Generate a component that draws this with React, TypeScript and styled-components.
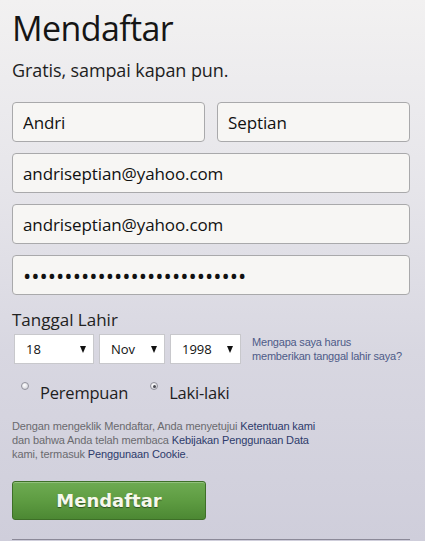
import React from 'react';
import styled, { createGlobalStyle } from 'styled-components';

const GlobalStyle = createGlobalStyle`
  html, body {
    margin: 0;
    padding: 0;
  }
  body {
    background: linear-gradient(to bottom, #f2f1f1 0%, #e6e5ea 35%, #d8d7e1 65%, #cfcedb 100%);
    min-height: 541px;
    font-family: 'Open Sans', 'Noto Sans', sans-serif;
  }
`;

const Page = styled.div`
  padding: 7px 15px 0 12px;
  box-sizing: border-box;
  width: 425px;
  height: 541px;
  overflow: hidden;
  display: flex;
  flex-direction: column;
`;

const Title = styled.h1`
  margin: 0;
  font-size: 34px;
  line-height: 42px;
  letter-spacing: -0.6px;
  font-weight: 400;
  color: #151515;
`;

const Subtitle = styled.p`
  margin: 10px 0 0;
  font-size: 18px;
  line-height: 23px;
  letter-spacing: -0.1px;
  color: #1e1e1e;
`;

const Fields = styled.div`
  margin-top: 20px;
  display: flex;
  flex-direction: column;
  gap: 11px;
`;

const NameRow = styled.div`
  display: grid;
  grid-template-columns: 1fr 1fr;
  gap: 12px;
`;

const TextInput = styled.input<{ $dots?: boolean }>`
  box-sizing: border-box;
  width: 100%;
  height: 40px;
  margin: 0;
  padding: 0 10px;
  border: 1px solid #a9a9ab;
  border-radius: 4px;
  background: #f7f6f4;
  font-family: 'Open Sans', 'Noto Sans', sans-serif;
  font-size: ${(p) => (p.$dots ? '22px' : '17px')};
  letter-spacing: ${(p) => (p.$dots ? '0' : '-0.1px')};
  color: #111;
  outline: none;
`;

const Label = styled.div`
  margin-top: 15px;
  font-size: 17px;
  line-height: 20px;
  color: #222;
`;

const BirthRow = styled.div`
  margin-top: 4px;
  padding-left: 2px;
  display: flex;
  align-items: center;
`;

const Select = styled.div<{ $width: number }>`
  box-sizing: border-box;
  width: ${(p) => p.$width}px;
  height: 30px;
  margin-right: 5px;
  padding: 0 7px 0 11px;
  display: flex;
  align-items: center;
  justify-content: space-between;
  background: #fff;
  border: 1px solid #c8c8cc;
  font-size: 13px;
  color: #111;
`;

const Arrow = styled.span`
  width: 0;
  height: 0;
  border-left: 3.5px solid transparent;
  border-right: 3.5px solid transparent;
  border-top: 7px solid #111;
`;

const Help = styled.a`
  margin-left: 6px;
  font-family: 'Liberation Sans', Arial, sans-serif;
  font-size: 11px;
  line-height: 14px;
  letter-spacing: -0.2px;
  color: #4e5b88;
  text-decoration: none;
`;

const GenderRow = styled.div`
  margin-top: 18px;
  padding-left: 9px;
  display: flex;
  gap: 22px;
`;

const RadioLabel = styled.label`
  display: flex;
  align-items: flex-start;
  gap: 11px;
  font-size: 16.5px;
  line-height: 22px;
  letter-spacing: -0.2px;
  color: #1e1e1e;
`;

const RadioDot = styled.span<{ $checked?: boolean }>`
  position: relative;
  box-sizing: border-box;
  width: 8px;
  height: 8px;
  border-radius: 50%;
  border: 1px solid #92929c;
  background: radial-gradient(circle at 40% 35%, #ffffff 0%, #e0e0e6 60%, #c2c2ca 100%);

  &::after {
    content: '';
    display: ${(p) => (p.$checked ? 'block' : 'none')};
    position: absolute;
    left: 1.5px;
    top: 1.5px;
    width: 3px;
    height: 3px;
    border-radius: 50%;
    background: #4a4a52;
  }
`;

const Terms = styled.p`
  margin: 15px 0 0;
  font-family: 'Liberation Sans', Arial, sans-serif;
  font-size: 11px;
  line-height: 14px;
  letter-spacing: -0.12px;
  color: #6a6a6e;
`;

const TermsLink = styled.a`
  color: #2d3b6b;
  text-decoration: none;
`;

const SubmitButton = styled.button`
  margin-top: 20px;
  width: 194px;
  height: 39px;
  border: 1px solid #3e6f28;
  border-radius: 3px;
  background: linear-gradient(to bottom, #6eab52 0%, #5e9c42 50%, #4c8833 100%);
  box-shadow: inset 0 1px 0 rgba(255, 255, 255, 0.25);
  font-family: 'DejaVu Sans', Verdana, sans-serif;
  font-weight: 700;
  font-size: 18px;
  color: #f6f8ec;
  text-shadow: 0 1px 1px rgba(0, 0, 0, 0.45);
  cursor: pointer;
`;

const Divider = styled.div`
  margin-top: 19px;
  height: 1px;
  background: #8b8998;
`;

export default function App() {
  return (
    <>
      <GlobalStyle />
      <Page>
        <Title>Mendaftar</Title>
        <Subtitle>Gratis, sampai kapan pun.</Subtitle>

        <Fields>
          <NameRow>
            <TextInput defaultValue="Andri" readOnly />
            <TextInput defaultValue="Septian" readOnly />
          </NameRow>
          <TextInput defaultValue="andriseptian@yahoo.com" readOnly />
          <TextInput defaultValue="andriseptian@yahoo.com" readOnly />
          <TextInput type="password" $dots defaultValue="andriseptian1998passwordxyz" readOnly />
        </Fields>

        <Label>Tanggal Lahir</Label>
        <BirthRow>
          <Select $width={80}>
            <span>18</span>
            <Arrow />
          </Select>
          <Select $width={66}>
            <span>Nov</span>
            <Arrow />
          </Select>
          <Select $width={71}>
            <span>1998</span>
            <Arrow />
          </Select>
          <Help href="#">
            Mengapa saya harus
            <br />
            memberikan tanggal lahir saya?
          </Help>
        </BirthRow>

        <GenderRow>
          <RadioLabel>
            <RadioDot />
            Perempuan
          </RadioLabel>
          <RadioLabel>
            <RadioDot $checked />
            Laki-laki
          </RadioLabel>
        </GenderRow>

        <Terms>
          Dengan mengeklik Mendaftar, Anda menyetujui <TermsLink href="#">Ketentuan kami</TermsLink>
          <br />
          dan bahwa Anda telah membaca <TermsLink href="#">Kebijakan Penggunaan Data</TermsLink>
          <br />
          kami, termasuk <TermsLink href="#">Penggunaan Cookie</TermsLink>.
        </Terms>

        <SubmitButton type="button">Mendaftar</SubmitButton>
        <Divider />
      </Page>
    </>
  );
}
